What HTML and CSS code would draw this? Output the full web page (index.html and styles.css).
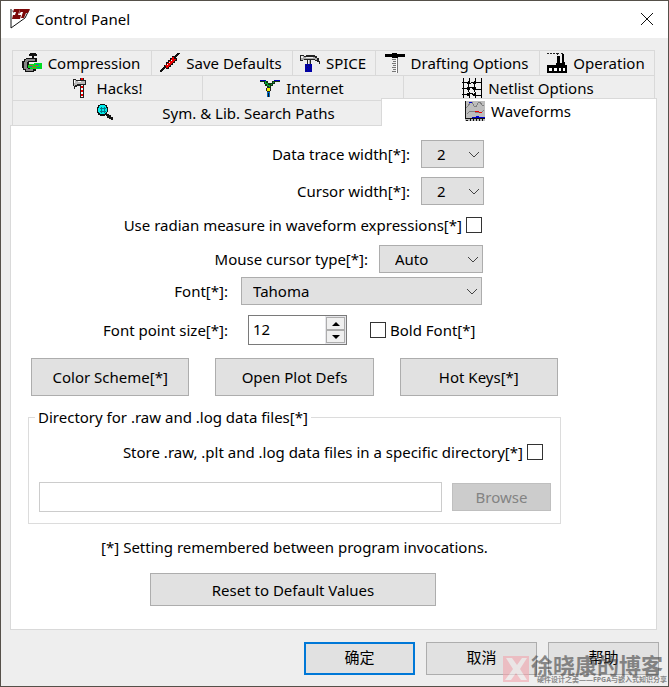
FILE: index.html
```html
<!DOCTYPE html>
<html lang="en">
<head>
  <meta charset="UTF-8">
  <meta name="viewport" content="width=device-width, initial-scale=1.0">
  <title>Control Panel</title>
  <link rel="stylesheet" href="styles.css">
</head>
<body>
  <div class="window">
    <header class="titlebar">
      <svg class="logo" viewBox="0 0 20 20">
        <path d="M1 0V19L15 9L19 1" fill="none" stroke="#111" stroke-width="1"/>
        <path d="M1 0L4 4M3 8H10" fill="none" stroke="#888" stroke-width="1"/>
        <path d="M4 0H10L8 6H11L10 10H2L3 6H5L6 3H3ZM10 0H20L18 4H16L14 9H11L13 3H11L9 5Z" fill="#7c0808"/>
      </svg>
      <h1>Control Panel</h1>
      <button class="close" aria-label="Close">
        <svg viewBox="0 0 12 12"><path d="M0 0L12 12M12 0L0 12" stroke="#111" stroke-width="1"/></svg>
      </button>
    </header>

    <nav class="tabs" role="tablist">
      <div class="tab-row five">
        <button class="tab" role="tab">
          <svg class="icon" viewBox="0 0 20 20">
            <path d="M8 0H14V1H15V3H12V6H10V3H7V1H8Z" fill="#111"/>
            <path d="M4 5H15V9H7V15H14V18H12V19H3V17H1V15H0V8H2V6H4Z" fill="#111"/>
            <path d="M4 6H13V8H6V9H5V15H6V16H11V18H4V16H2V9H3V7H4Z" fill="#888"/>
            <path d="M7 11H12V10H20V16H8V15H6V12H7Z" fill="#0d2"/>
            <path d="M7 12H11V13H7ZM13 12H16V13H13ZM10 14H14V15H10Z" fill="#a62"/>
            <path d="M14 11H17V12H14ZM15 14H18V15H15ZM8 13H10V14H8Z" fill="#08a"/>
          </svg>
          Compression
        </button>
        <button class="tab" role="tab">
          <svg class="icon" viewBox="0 0 20 20">
            <path d="M19 0L14 5M0 19L5 14" stroke="#111" stroke-width="2"/>
            <path d="M12 3H15V5H17V8H15V10H13V12H11V14H9V16H6V15H4V12H6V9H8V7H10V5H12Z" fill="#111"/>
            <path d="M12 4H14V6H16V7H14V9H12V11H10V13H8V15H6V13H5V12H7V10H9V8H11V6H12Z" fill="#e90000"/>
            <path d="M7 12H9V10H11V8H13V6H15V8H13V10H11V12H9V14H7Z" fill="#e90000"/>
            <path d="M11 7H12V8H11ZM9 9H10V10H9ZM7 11H8V12H7Z" fill="#fff"/>
          </svg>
          Save Defaults
        </button>
        <button class="tab" role="tab">
          <svg class="icon" viewBox="0 0 20 20">
            <path d="M0 2H4V3H6V2H15V3H17V5H19V8H20V11H19V9H17V8H15V7H11V11H7V7H3V8H0Z" fill="#222"/>
            <path d="M1 3H4V4H15V5H17V7H15V6H4V7H1ZM8 7H10V11H8Z" fill="#aaa"/>
            <path d="M1 3H3V5H1ZM6 4H13V5H6ZM8 7H9V11H8Z" fill="#eee"/>
            <path d="M5 11H12V19H5Z" fill="#0000a8"/>
            <path d="M6 12H7V13H6ZM9 12H10V13H9ZM7 14H8V15H7ZM10 15H11V16H10ZM6 17H7V18H6Z" fill="#115"/>
          </svg>
          SPICE
        </button>
        <button class="tab" role="tab">
          <svg class="icon" viewBox="0 0 20 20">
            <path d="M7 0H12V1H20V4H13V5H7V4H0V1H7Z" fill="#000"/>
            <path d="M12 5H13V20H12ZM7 6H11V7H7ZM8 8H11V9H8ZM7 10H11V11H7ZM8 12H11V13H8ZM7 14H11V15H7ZM8 16H11V17H8ZM7 18H11V19H7Z" fill="#777"/>
            <path d="M11 5H12V20H11Z" fill="#fff"/>
          </svg>
          Drafting Options
        </button>
        <button class="tab" role="tab">
          <svg class="icon" viewBox="0 0 20 20">
            <path d="M0 0H2V1H0ZM3 0H5V1H3ZM6 0H8V1H6ZM9 0H12V1H9ZM10 1H11V2H10ZM14 0H16V1H14Z" fill="#222"/>
            <path d="M10 3H13V10H15V1H17V9H18V12H20V20H0V12H9V10H10Z" fill="#000"/>
            <path d="M2 15H5V18H2ZM7 15H10V18H7ZM12 15H14V18H12ZM16 15H18V18H16Z" fill="#fff"/>
          </svg>
          Operation
        </button>
      </div>
      <div class="tab-row three">
        <button class="tab" role="tab">
          <svg class="icon" viewBox="0 0 20 20">
            <path d="M2 1H5V2H9V0H13V2H15V7H13V20H9V8H6V9H4V11H3V8H2Z" fill="#222"/>
            <path d="M3 2H5V3H14V6H6V7H4V8H3Z" fill="#bbb"/>
            <path d="M3 2H4V5H3ZM7 3H10V4H7Z" fill="#fff"/>
            <path d="M10 7H12V19H10Z" fill="#fff"/>
            <path d="M10 0H12V2H10ZM10 8H12V10H10ZM10 12H12V14H10ZM10 16H12V18H10Z" fill="#e00"/>
          </svg>
          Hacks!
        </button>
        <button class="tab" role="tab">
          <svg class="icon" viewBox="0 0 20 20">
            <path d="M0 2H6V3H8V5H12V3H14V2H20V4H15V6H13V8H11V10H7V8H5V6H4V4H0Z" fill="#131"/>
            <path d="M0 2H6V3H0ZM14 2H20V3H14Z" fill="#00b"/>
            <path d="M5 3H6V5H8V7H10V9H9V8H7V6H5ZM13 4H14V5H12V7H11V6H12Z" fill="#0a3"/>
            <path d="M6 10H7V9H10V10H11V13H10V14H7V13H6Z" fill="#222"/>
            <path d="M7 10H10V13H7Z" fill="#ee0"/>
            <path d="M7 14H10V19H7Z" fill="#06b"/>
            <path d="M8 15H9V19H8Z" fill="#111"/>
          </svg>
          Internet
        </button>
        <button class="tab" role="tab">
          <svg class="icon" viewBox="0 0 20 20">
            <path d="M1 0V20M7 0V4L6 6V12L7 14V20M13 0V5L12 7V12L13 14V20M19 0V20" fill="none" stroke="#000" stroke-width="1"/>
            <path d="M0 4H4L6 5H9L11 4H20M0 10H4L6 11L9 9L12 11H20M0 16H4L6 17L9 15L12 17H20" fill="none" stroke="#000" stroke-width="1"/>
            <path d="M6 3H8V6H5V5H6ZM12 3H14V6H11V5H12ZM5 9H8V12H5ZM11 9H14V12H11ZM5 15H8V18H5ZM12 15H14V18H11V16H12Z" fill="#000"/>
          </svg>
          Netlist Options
        </button>
      </div>
      <div class="tab-row two">
        <button class="tab search" role="tab">
          <svg class="icon" viewBox="0 0 20 20">
            <path d="M5 1H10V2H12V4H13V9H12V11H14V12H16V14H18V17H16V16H14V15H12V13H11V12H10V13H5V12H3V10H2V4H3V2H5Z" fill="#111"/>
            <path d="M5 2H10V3H11V5H12V9H11V10H10V11H5V10H4V9H3V5H4V3H5Z" fill="#0ee"/>
            <path d="M6 4H7V10H6ZM9 4H10V10H9ZM5 5H11V6H5ZM5 8H11V9H5Z" fill="#078"/>
          </svg>
          Sym. &amp; Lib. Search Paths
        </button>
        <button class="tab active" role="tab" aria-selected="true">
          <svg class="icon" viewBox="0 0 20 20">
            <path d="M0 0H20V20H0Z" fill="#bdbdbd"/>
            <path d="M1 7L3 5L5 2L7 1L9 5L11 6L13 2L15 1L17 4L19 5M2 13L4 11L7 10L10 11L13 12L17 11L19 9" fill="none" stroke="#808080"/>
            <path d="M4 1H7V2H4ZM7 16H11V15H14V16H20V17H7Z" fill="#00c"/>
            <path d="M10 10H14V11H10ZM14 11H17V12H14Z" fill="#e00"/>
            <path d="M0 0H1V17H20V18H0ZM1 19H3V20H1ZM5 18H6V20H5ZM8 18H9V20H8ZM11 18H12V20H11ZM14 18H15V20H14ZM17 18H18V20H17Z" fill="#111"/>
          </svg>
          Waveforms
        </button>
      </div>
    </nav>

    <main class="panel">
      <form class="settings">
        <div class="row">
          <label for="traceWidth">Data trace width[*]:</label>
          <span class="select small">
            <select id="traceWidth"><option>1</option><option selected>2</option><option>3</option></select>
            <svg viewBox="0 0 10 6"><path d="M0 0L5 5L10 0"/></svg>
          </span>
        </div>
        <div class="row">
          <label for="cursorWidth">Cursor width[*]:</label>
          <span class="select small">
            <select id="cursorWidth"><option>1</option><option selected>2</option><option>3</option></select>
            <svg viewBox="0 0 10 6"><path d="M0 0L5 5L10 0"/></svg>
          </span>
        </div>
        <div class="row check">
          <label for="radian">Use radian measure in waveform expressions[*]</label>
          <input type="checkbox" id="radian">
        </div>
        <div class="row tight">
          <label for="cursorType">Mouse cursor type[*]:</label>
          <span class="select medium">
            <select id="cursorType"><option>Auto</option></select>
            <svg viewBox="0 0 10 6"><path d="M0 0L5 5L10 0"/></svg>
          </span>
        </div>
        <div class="row font-row">
          <label for="font">Font[*]:</label>
          <span class="select large">
            <select id="font"><option>Tahoma</option></select>
            <svg viewBox="0 0 10 6"><path d="M0 0L5 5L10 0"/></svg>
          </span>
        </div>
        <div class="row size-row">
          <label for="fontSize">Font point size[*]:</label>
          <span class="spinner">
            <input type="text" id="fontSize" value="12">
            <span class="arrows">
              <button type="button" aria-label="Increase"><svg viewBox="0 0 8 4"><path d="M4 0L8 4H0Z"/></svg></button>
              <button type="button" aria-label="Decrease"><svg viewBox="0 0 8 4"><path d="M0 0H8L4 4Z"/></svg></button>
            </span>
          </span>
          <span class="bold">
            <input type="checkbox" id="boldFont">
            <label for="boldFont">Bold Font[*]</label>
          </span>
        </div>

        <div class="actions">
          <button type="button" class="btn">Color Scheme[*]</button>
          <button type="button" class="btn">Open Plot Defs</button>
          <button type="button" class="btn">Hot Keys[*]</button>
        </div>

        <fieldset>
          <legend>Directory for .raw and .log data files[*]</legend>
          <div class="store">
            <label for="storeDir">Store .raw, .plt and .log data files in a specific directory[*]</label>
            <input type="checkbox" id="storeDir">
          </div>
          <div class="path">
            <input type="text" aria-label="Directory">
            <button type="button" class="btn" disabled>Browse</button>
          </div>
        </fieldset>

        <p class="note">[*] Setting remembered between program invocations.</p>
        <button type="button" class="btn reset">Reset to Default Values</button>
      </form>
    </main>

    <footer class="footer">
      <button class="btn ok">确定</button>
      <button class="btn">取消</button>
      <button class="btn">帮助</button>
    </footer>

    <div class="watermark">
      <svg viewBox="0 0 26 26">
        <path d="M0 0H26V26H0Z" fill="#f3a6ae"/>
        <path d="M3 2H9L14 9L19 2H24L17 13L24 24H18L13 17L8 24H2L10 13Z" fill="#f0e8e8"/>
      </svg>
      <div>
        <strong>徐晓康的博客</strong>
        <small>硬件设计之美——FPGA与嵌入式知识分享</small>
      </div>
    </div>
  </div>
</body>
</html>
```
FILE: styles.css
```css
* {
  box-sizing: border-box;
}

body {
  margin: 0;
  font-family: "Noto Sans", "Noto Sans CJK SC", sans-serif;
  font-size: 15px;
  line-height: 20px;
  color: #000;
}

button,
input,
select {
  font: inherit;
  color: inherit;
  margin: 0;
}

.window {
  position: relative;
  display: flex;
  flex-direction: column;
  min-height: 100vh;
  background: #eee;
  border: 1px solid #555049;
}

.titlebar {
  display: flex;
  align-items: center;
  height: 37px;
  padding: 0 15px 2px 9px;
  background: #fff;
}

.titlebar h1 {
  flex: 1;
  margin: 0 0 0 5px;
  font-size: 15px;
  font-weight: normal;
}

.logo {
  width: 20px;
  height: 20px;
}

.close {
  padding: 0;
  border: none;
  background: none;
}

.close svg {
  display: block;
  width: 12px;
  height: 12px;
}

.tabs {
  padding: 12px 11px 0 11px;
}

.tab-row {
  display: grid;
  margin-right: 2px;
  border-left: 1px solid #d9d9d9;
}

.five {
  grid-template-columns: 139fr 141fr 83fr 164fr 115fr;
}

.three {
  grid-template-columns: 190fr 201fr 251fr;
}

.two {
  grid-template-columns: 369fr 275fr;
  margin-right: 0;
}

.tab {
  display: flex;
  align-items: center;
  justify-content: center;
  gap: 6px;
  min-width: 0;
  height: 25px;
  padding: 0 2px 0 0;
  border: solid #d9d9d9;
  border-width: 1px 1px 0 0;
  background: #eee;
  white-space: nowrap;
}

.icon {
  flex: none;
  width: 20px;
  height: 20px;
  shape-rendering: crispEdges;
}

.search {
  gap: 47px;
  padding-left: 38px;
}

.active {
  z-index: 1;
  height: 28px;
  margin: -2px 0 -1px -1px;
  padding-bottom: 3px;
  border-left-width: 1px;
  background: #fff;
}

.panel {
  flex: 1;
  margin: 0 11px 0 9px;
  padding: 14px 17px 23px;
  border: 1px solid #d9d9d9;
  background: #fff;
}

.settings {
  max-width: 533px;
}

.row {
  display: flex;
  align-items: center;
  justify-content: flex-end;
  gap: 11px;
  margin-bottom: 9px;
  padding-right: 77px;
}

.check {
  gap: 4px;
  margin: 10px 0;
  padding-right: 79px;
}

.tight {
  margin-bottom: 4px;
  padding-right: 78px;
}

.font-row {
  gap: 13px;
  margin-bottom: 10px;
  padding-right: 79px;
}

.size-row {
  justify-content: flex-start;
  gap: 20px;
  margin-bottom: 13px;
  padding-right: 0;
}

.size-row > label {
  width: 200px;
  text-align: right;
}

.select {
  position: relative;
}

.select select {
  display: block;
  width: 100%;
  height: 28px;
  padding: 0 24px 0 15px;
  border: 1px solid #adadad;
  border-radius: 0;
  background: #e1e1e1;
  appearance: none;
}

.select svg {
  position: absolute;
  top: 12px;
  right: 5px;
  width: 10px;
  height: 6px;
  fill: none;
  stroke: #444;
  pointer-events: none;
}

.small {
  width: 63px;
}

.medium {
  width: 104px;
}

.large {
  width: 241px;
}

.large select {
  padding-left: 11px;
}

input[type="checkbox"] {
  flex: none;
  width: 16px;
  height: 16px;
  border: 1px solid #333;
  background: #fff;
  appearance: none;
}

input[type="text"] {
  min-width: 0;
  padding: 0 4px;
  border: 1px solid #ccc;
  border-radius: 0;
  background: #fff;
}

.spinner {
  display: flex;
  width: 99px;
  height: 30px;
  border: 1px solid #7a7a7a;
}

.spinner input[type="text"] {
  flex: 1;
  padding-bottom: 3px;
  border: none;
}

.arrows {
  display: flex;
  flex-direction: column;
  width: 21px;
  padding: 1px;
  background: #e6e6ea;
}

.arrows button {
  display: flex;
  flex: 1;
  align-items: center;
  justify-content: center;
  padding: 0;
  border: 1px solid #adadad;
  background: #f0f0f0;
}

.arrows svg {
  width: 8px;
  height: 4px;
}

.bold {
  display: flex;
  align-items: center;
  gap: 4px;
  margin-left: 3px;
}

.btn {
  height: 33px;
  padding: 0;
  border: 1px solid #adadad;
  background: #e1e1e1;
}

.btn:disabled {
  border-color: #bfbfbf;
  background: #ccc;
  color: #838383;
}

.actions {
  display: flex;
  gap: 26px;
  margin-bottom: 11px;
  padding: 0 3px;
}

.actions .btn {
  flex: 1;
  height: 38px;
}

fieldset {
  margin: 0;
  padding: 15px 9px 11px 10px;
  border: 1px solid #dcdcdc;
}

legend {
  margin-left: -4px;
  padding: 0 3px;
}

.store {
  display: flex;
  align-items: center;
  justify-content: flex-end;
  gap: 4px;
  margin-bottom: 20px;
  padding-right: 8px;
}

.path {
  display: flex;
  align-items: center;
  gap: 10px;
}

.path input {
  flex: 1;
  height: 30px;
}

.path .btn {
  width: 99px;
  height: 28px;
}

.note {
  margin: 13px 0 16px;
  text-align: center;
}

.reset {
  display: block;
  width: 286px;
  margin-left: 122px;
}

.footer {
  display: flex;
  justify-content: flex-end;
  gap: 11px;
  padding: 12px 9px 11px;
}

.footer .btn {
  width: 111px;
  padding-bottom: 3px;
}

.footer .ok {
  border: 2px solid #0078d7;
}

.watermark {
  position: absolute;
  right: 1px;
  bottom: 2px;
  display: flex;
  align-items: center;
  gap: 2px;
  opacity: 0.6;
  color: #444;
  pointer-events: none;
}

.watermark svg {
  width: 26px;
  height: 26px;
}

.watermark strong,
.watermark small {
  display: block;
  white-space: nowrap;
}

.watermark strong {
  font-size: 22px;
  line-height: 22px;
}

.watermark small {
  padding-left: 6px;
  font-size: 7px;
  font-weight: bold;
  line-height: 8px;
}
```
